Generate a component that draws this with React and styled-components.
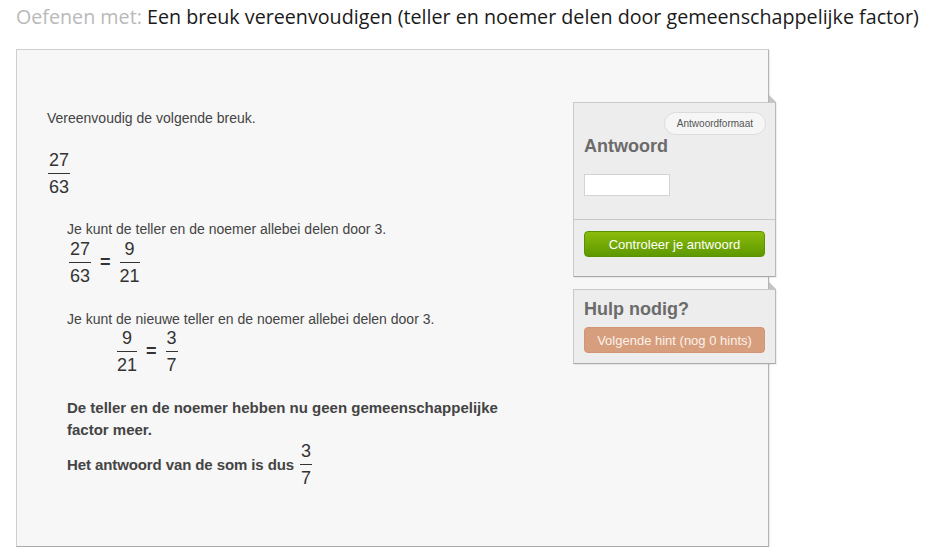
import React from "react";
import styled, { createGlobalStyle } from "styled-components";

const Global = createGlobalStyle`
  html, body { margin: 0; padding: 0; background: #fff; }
  body { font-family: "Liberation Sans", Arial, sans-serif; color: #444; }
`;

const Page = styled.div`
  padding: 5px 0 0 16px;
`;

const Title = styled.h1`
  margin: 0;
  font-family: "Open Sans", Lato, sans-serif;
  font-weight: 400;
  font-size: 19.7px;
  line-height: 24px;
  color: #1a1a1a;
  white-space: nowrap;
`;

const Muted = styled.span`
  color: #b9b9b9;
`;

const Card = styled.div`
  box-sizing: border-box;
  margin-top: 20px;
  width: 753px;
  height: 498px;
  background: #f7f7f7;
  border: 1px solid #cfcfcf;
  border-bottom-color: #a9a9a9;
  border-right-color: #b5b5b5;
  box-shadow: 1px 1px 1px rgba(0, 0, 0, 0.08);
  display: flex;
  align-items: flex-start;
`;

const Problem = styled.div`
  flex: 1;
  padding: 59px 0 0 30px;
`;

const Text = styled.p`
  margin: 0;
  font-size: 14px;
  line-height: 18px;
  color: #444;
`;

const Step = styled.div`
  margin: ${(p) => p.$mt || 0}px 0 0 20px;
  width: 445px;
`;

const Equation = styled.div`
  display: flex;
  align-items: center;
  gap: 8px;
  margin: ${(p) => p.$mt || 0}px 0 0 ${(p) => p.$indent || 0}px;
`;

const FracWrap = styled.div`
  display: inline-flex;
  flex-direction: column;
  align-items: stretch;
  text-align: center;
  font-size: 18px;
  font-weight: 400;
  color: #333;
  padding: 0 1px;
  margin-top: ${(p) => p.$mt || 0}px;
  margin-left: ${(p) => p.$ml || 0}px;
`;

const Num = styled.span`
  display: block;
  line-height: 20px;
  padding: 0 1px 3px;
  border-bottom: 1px solid #333;
`;

const Den = styled.span`
  display: block;
  line-height: 20px;
  padding-top: 3px;
`;

const Eq = styled.span`
  font-size: 18px;
  font-weight: 700;
  color: #333;
`;

const Bold = styled.p`
  margin: 22px 0 0 0;
  font-size: 15px;
  font-weight: 700;
  line-height: 22px;
  color: #444;
`;

const Answer = styled.div`
  display: flex;
  align-items: center;
  gap: 5px;
  font-size: 15px;
  font-weight: 700;
  letter-spacing: -0.1px;
  color: #444;
`;

const Sidebar = styled.div`
  width: 203px;
  margin: 52px -8px 0 0;
  display: flex;
  flex-direction: column;
  gap: 12px;
`;

const Panel = styled.div`
  position: relative;
  box-sizing: border-box;
  background: #ededed;
  border: 1px solid #c9c9c9;
  border-bottom-color: #aaa;
  border-right-color: #b9b9b9;
  box-shadow: 1px 1px 1px rgba(0, 0, 0, 0.06);
  &::before {
    content: "";
    position: absolute;
    top: -8px;
    right: -1px;
    width: 0;
    height: 0;
    border-bottom: 7px solid #c4c4c4;
    border-right: 7px solid transparent;
  }
`;

const Section = styled.div`
  padding: ${(p) => p.$pad};
  display: flex;
  flex-direction: column;
  & + & {
    border-top: 1px solid #c9c9c9;
  }
`;

const Pill = styled.span`
  align-self: flex-end;
  box-sizing: border-box;
  height: 23px;
  line-height: 21px;
  padding: 0 12px;
  border: 1px solid #dcdcdc;
  border-radius: 12px;
  background: #f6f6f6;
  font-size: 10px;
  color: #555;
`;

const Heading = styled.h2`
  margin: 0;
  font-size: 18px;
  font-weight: 700;
  line-height: 22px;
  color: #6b6b6b;
`;

const Input = styled.input`
  box-sizing: border-box;
  margin-top: 17px;
  width: 86px;
  height: 22px;
  border: 1px solid #d3d3d3;
  background: #fff;
  padding: 0 4px;
`;

const Button = styled.button`
  box-sizing: border-box;
  width: 181px;
  height: 26px;
  margin-top: ${(p) => p.$mt || 0}px;
  border-radius: 4px;
  font-family: "Liberation Sans", Arial, sans-serif;
  font-size: 13px;
  color: #fff;
  cursor: pointer;
  ${(p) =>
    p.$variant === "green"
      ? `
    background: linear-gradient(#8cbc0c, #5e9800);
    border: 1px solid #5b9200;
  `
      : `
    background: #d79e7d;
    border: 1px solid #d09574;
    color: #fbf1ea;
  `}
`;

function Fraction({ n, d, mt, ml }) {
  return (
    <FracWrap $mt={mt} $ml={ml}>
      <Num>{n}</Num>
      <Den>{d}</Den>
    </FracWrap>
  );
}

export default function App() {
  return (
    <Page>
      <Global />
      <Title>
        <Muted>Oefenen met:</Muted> Een breuk vereenvoudigen (teller en noemer delen door
        gemeenschappelijke factor)
      </Title>
      <Card>
        <Problem>
          <Text>Vereenvoudig de volgende breuk.</Text>
          <Fraction n="27" d="63" mt={23} />
          <Step $mt={23}>
            <Text>Je kunt de teller en de noemer allebei delen door 3.</Text>
            <Equation $mt={1} $indent={1}>
              <Fraction n="27" d="63" />
              <Eq>=</Eq>
              <Fraction n="9" d="21" />
            </Equation>
          </Step>
          <Step $mt={24}>
            <Text>Je kunt de nieuwe teller en de noemer allebei delen door 3.</Text>
            <Equation $indent={49}>
              <Fraction n="9" d="21" />
              <Eq>=</Eq>
              <Fraction n="3" d="7" />
            </Equation>
          </Step>
          <Step>
            <Bold>De teller en de noemer hebben nu geen gemeenschappelijke factor meer.</Bold>
            <Answer>
              <span>Het antwoord van de som is dus</span>
              <Fraction n="3" d="7" />
            </Answer>
          </Step>
        </Problem>
        <Sidebar>
          <Panel>
            <Section $pad="9px 9px 23px 10px">
              <Pill>Antwoordformaat</Pill>
              <Heading>Antwoord</Heading>
              <Input aria-label="Antwoord" />
            </Section>
            <Section $pad="11px 9px 19px 10px">
              <Button $variant="green">Controleer je antwoord</Button>
            </Section>
          </Panel>
          <Panel>
            <Section $pad="8px 9px 10px 10px">
              <Heading>Hulp nodig?</Heading>
              <Button $variant="hint" $mt={7}>
                Volgende hint (nog 0 hints)
              </Button>
            </Section>
          </Panel>
        </Sidebar>
      </Card>
    </Page>
  );
}
